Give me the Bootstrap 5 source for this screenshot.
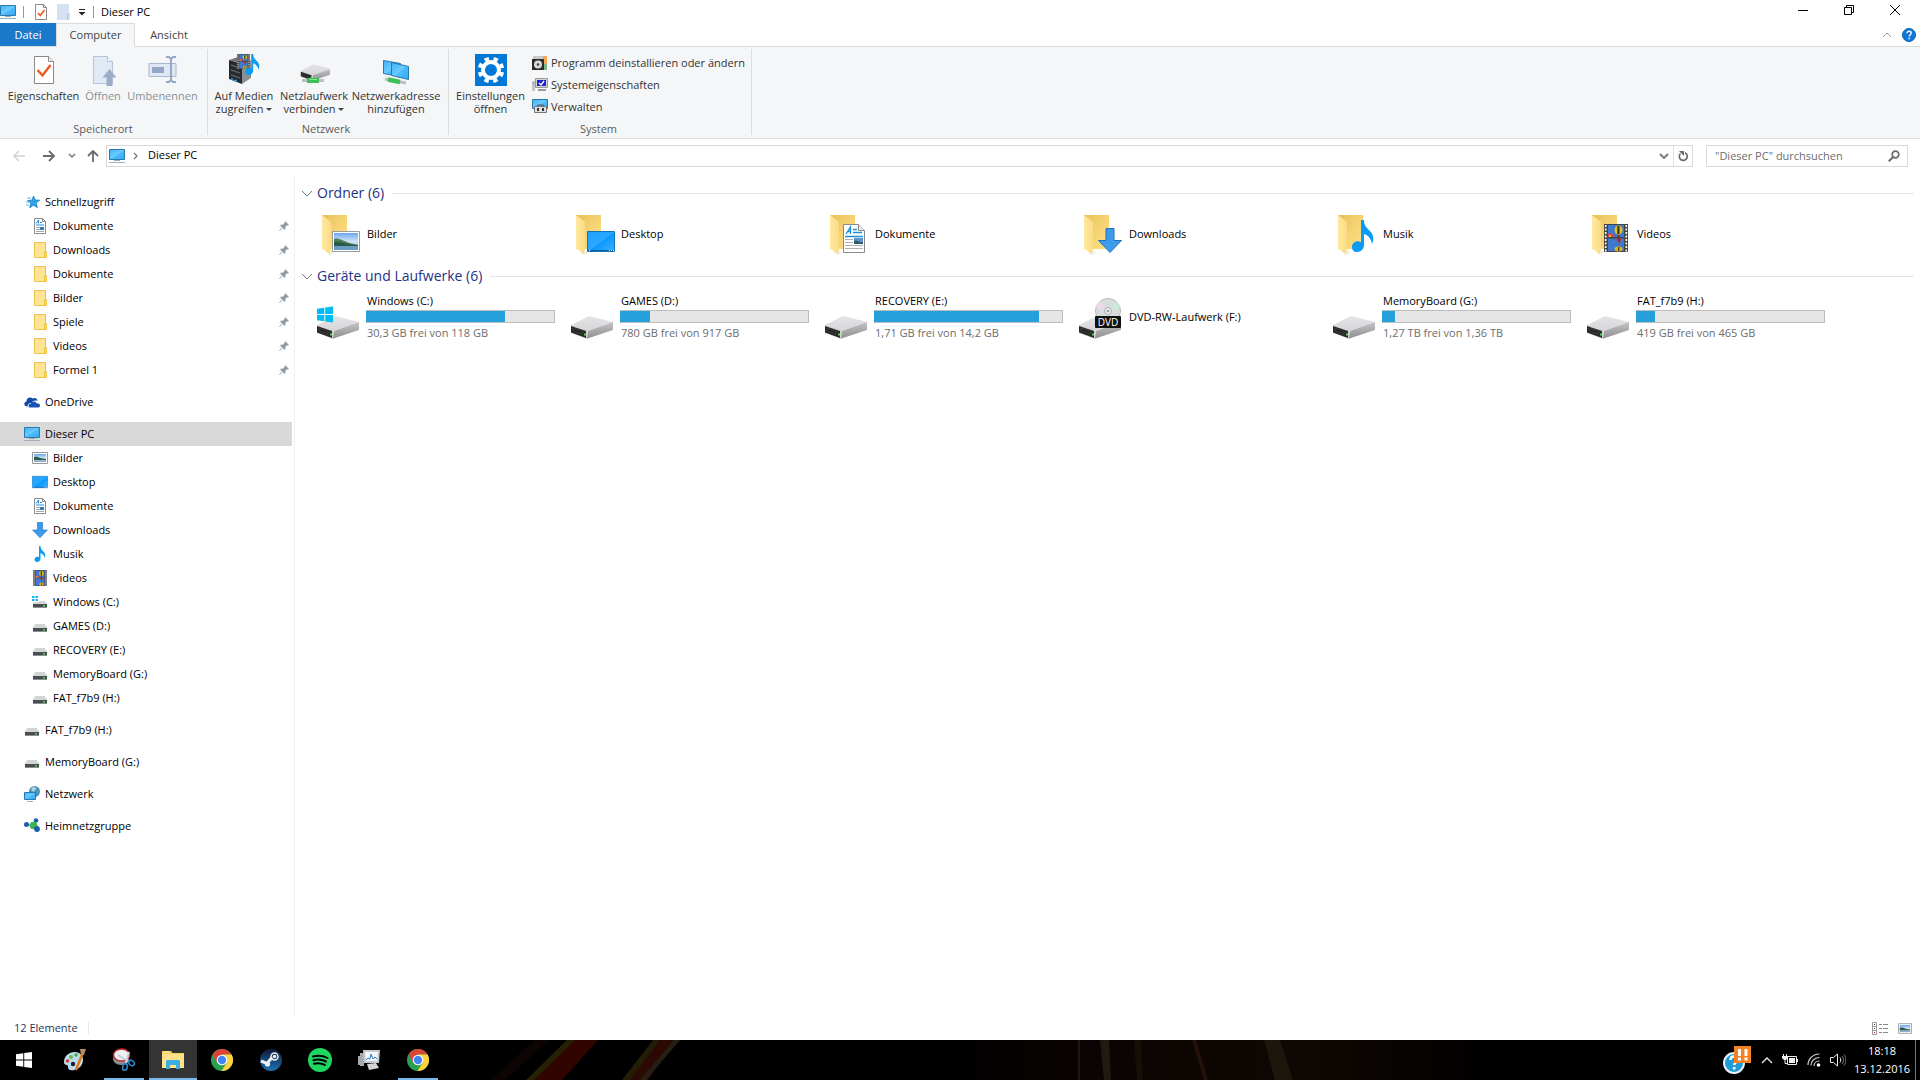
<!DOCTYPE html>
<html lang="de">
<head>
<meta charset="utf-8">
<meta name="viewport" content="width=device-width, initial-scale=1">
<title>Dieser PC</title>
<link href="https://cdn.jsdelivr.net/npm/bootstrap@5.3.0/dist/css/bootstrap.min.css" rel="stylesheet">
<style>
body{font-family:"Open Sans","Noto Sans",sans-serif;font-size:11px;line-height:16px;color:#000;background:#fff}
svg{display:block;flex:none}
.btn{--bs-btn-font-size:11px;--bs-btn-line-height:13px;--bs-btn-padding-x:0;--bs-btn-padding-y:0;--bs-btn-border-width:0;--bs-btn-border-radius:0;--bs-btn-color:#333;--bs-btn-disabled-color:#8a8f96;--bs-btn-disabled-opacity:1;--bs-btn-hover-bg:#e5f3ff}
.i16{width:16px;height:16px}
.i32{width:32px;height:32px}
.i48{width:48px;height:48px}
.titlebar{height:23px;gap:7px;padding-right:2px}
.titlebar .first-tool{padding-left:3px}
.winbtn{width:46px;height:20px}
.vline{width:1px;height:12px;background:#999}
.tabrow{height:24px;box-shadow:inset 0 -1px #dadbdc}
.tabrow a{height:23px;line-height:24px;text-align:center;color:#444;text-decoration:none}
.tabrow .tab-file{width:56px;background:#1979ca;color:#fff}
.tabrow .tab-on{width:79px;height:24px;line-height:22px;background:#f5f6f7;border:1px solid #dadbdc;border-width:1px 1px 0}
.tabrow .tab-view{width:68px}
.tabrow .tools{gap:10px;padding-right:4px}
.ribbon{height:92px;background:#f5f6f7;border-bottom:1px solid #dadbdc}
.group{margin:2px 0 3px;padding:2px 6px 0 5px;border-right:1px solid #dcdddf}
.group-net{padding-left:1px;padding-right:5px}
.group-sys{padding-left:3px}
.group-name{color:#5a5a5a;line-height:12px}
.big{display:flex;flex-direction:column;align-items:center;gap:3px;height:62px;padding-top:3px;white-space:nowrap}
.w-s{width:42px}.w-m{width:70px}.w-l{width:77px}.w-xl{width:94px}
.caret{display:inline-block;border:3px solid transparent;border-top-color:#444;border-bottom:0;vertical-align:2px}
.cmd-list{padding-left:3px}
.small-cmd{display:flex;align-items:center;gap:3px;height:22px;white-space:nowrap}
.toolbar{padding:6px 12px 8px 4px}
.t-30{width:30px}.t-26{width:26px}.t-16{width:16px}.t-18{width:18px}
.box{height:22px;border:1px solid #d9d9d9}
.addressbox{padding-left:2px;gap:8px;margin-right:13px}
.addressbox a{padding-left:2px;line-height:18px;margin-bottom:2px}
.searchbox{width:202px;padding:0 7px 0 8px}
.searchbox input{border:0;outline:0;padding:0;min-width:0;color:#333;background:none}
.searchbox input::placeholder{color:#6d6d6d}
.sidebar{width:295px;padding-top:15px;border-right:1px solid #f0f0f0}
.sidebar ul{margin-bottom:8px}
.sidebar a{display:flex;align-items:center;gap:5px;height:24px;width:292px;padding:0 3px 0 24px;color:#000;text-decoration:none}
.sidebar ul ul a{padding-left:32px}
.sidebar a.current{background:#d9d9d9}
.content{padding:7px 6px 0 6px}
.sec{height:22px;gap:4px;font-size:14px;line-height:22px;color:#1e3287;margin:0 0 6px;font-weight:400}
.sec hr{border-color:#e2e2e2;opacity:1;margin:0 0 0 4px}
.tiles{padding-left:12px;margin-bottom:7px}
.tile{display:flex;align-items:center;gap:5px;width:254px;height:48px;color:#000;text-decoration:none}
.tile-text{padding-left:1px}
.drive-info{width:189px}
.drive-info .progress{height:13px;margin:2px 0 1px;background:#e6e6e6;border:1px solid #bcbcbc;border-left-width:0;border-radius:0}
.drive-info .progress-bar{background:#26a0da}
.l15{line-height:15px}
.l17{line-height:17px;color:#6d6d6d}
.statusbar{height:24px;gap:10px;padding:0 8px 0 14px;color:#1e395b}
.statusbar .sepline{width:1px;height:12px;background:#e8e8e8}
.taskbar{height:40px;background:#000;position:relative;overflow:hidden;color:#fff}
.streaks{position:absolute;left:0;top:0}
.tasks{gap:1px;margin-left:3px}
.task{width:48px;height:40px;position:relative;display:flex;align-items:center;justify-content:center}
.task.open::after{content:"";position:absolute;left:4px;right:4px;bottom:0;height:2px;background:#76b9ed}
.task.front{background:#343434}
.task.front::after{left:0;right:0}
.tray{gap:9px}
.clock{line-height:18px;width:60px;text-align:center;margin:0 -6px 0 -3px}
.show-desk{width:5px;height:40px;border-left:1px solid #777}
</style>
<script src="https://cdn.jsdelivr.net/npm/bootstrap@5.3.0/dist/js/bootstrap.bundle.min.js" defer></script>
</head>
<body>
<svg width="0" height="0" class="position-absolute" aria-hidden="true">
<defs>
<linearGradient id="gScr" x1="0" y1="0" x2="1" y2="1"><stop offset="0" stop-color="#3fb2f5"/><stop offset=".5" stop-color="#6ccbff"/><stop offset=".52" stop-color="#4fbcfb"/><stop offset="1" stop-color="#35a8f3"/></linearGradient>
<linearGradient id="gDesk" x1="0" y1="0" x2="1" y2="1"><stop offset="0" stop-color="#1ea2ff"/><stop offset=".5" stop-color="#2ba8ff"/><stop offset=".52" stop-color="#0a98ff"/><stop offset="1" stop-color="#3db1ff"/></linearGradient>
<linearGradient id="gBack" x1="0" y1="0" x2="1" y2="1"><stop offset="0" stop-color="#e9c05a"/><stop offset=".5" stop-color="#f5d373"/><stop offset="1" stop-color="#ffe08a"/></linearGradient>
<linearGradient id="gFlap" x1="0" y1="0" x2="1" y2="0"><stop offset="0" stop-color="#ffe89e"/><stop offset="1" stop-color="#fbdc85"/></linearGradient>
<linearGradient id="gTop" x1="0" y1="0" x2="0" y2="1"><stop offset="0" stop-color="#e4e4e6"/><stop offset="1" stop-color="#d6d6d9"/></linearGradient>
<linearGradient id="gSide" x1="0" y1="0" x2="0" y2="1"><stop offset="0" stop-color="#c4c4c6"/><stop offset="1" stop-color="#8f8f92"/></linearGradient>
<linearGradient id="gSky" x1="0" y1="0" x2="0" y2="1"><stop offset="0" stop-color="#6aa8ee"/><stop offset=".5" stop-color="#cfe4f7"/><stop offset="1" stop-color="#7fa6c4"/></linearGradient>
<linearGradient id="gSteam" x1="0" y1="0" x2="0" y2="1"><stop offset="0" stop-color="#10183c"/><stop offset="1" stop-color="#1c73b0"/></linearGradient>
<linearGradient id="gNight" x1="0" y1="0" x2="1" y2="0"><stop offset="0" stop-color="#000"/><stop offset=".3" stop-color="#0b0402"/><stop offset=".65" stop-color="#0f0702"/><stop offset="1" stop-color="#000"/></linearGradient>
</defs>
<symbol id="pc" viewBox="0 0 16 16"><path d="M.5 1.500h15v10H.5z" fill="url(#gScr)" stroke="#2879ad"/><path d="M5 12.500h6" stroke="#9aa7b5"/><path d="M0 14.500h16" stroke="#9fb0c6"/></symbol>
<symbol id="docArt" viewBox="0 0 22 29"><path d="M.5.5h15l6 6v22H.5z" fill="#fff" stroke="#8a8a8a"/><path d="M15.500.5v6h6" fill="#e8e8e8" stroke="#8a8a8a"/><path d="M3 10 7.500 3v7M4.500 7.500h3M10 5.500h4M10 8.500h9" stroke="#1c8fdc" stroke-width="1.300" fill="none"/><path d="M2 12.500h18" stroke="#1c8fdc" stroke-width="1.500"/><path d="M2 15.500h8M2 18.500h8M2 21.500h18M2 24.500h18" stroke="#b0b0b0"/><path d="M11 14h9v6h-9z" fill="#5d93c9"/><path d="M11 17c3-2 5 2 9 1v2h-9z" fill="#2c5a6a"/></symbol>
<symbol id="doc" viewBox="0 0 16 16"><path d="M2.500.5h8l3 3v12h-11z" fill="#fff" stroke="#8a8a8a"/><path d="M10.500.5v3h3" fill="none" stroke="#8a8a8a"/><path d="M4 5.500 6.500 2v3.500M8 4.500h2M4 7h8" stroke="#1c8fdc" fill="none"/><path d="M4 9.500h4M4 11.500h4M4 13.500h8" stroke="#a0a8b0"/><path d="M8 9h4v3H8z" fill="#3a7cb5"/></symbol>
<symbol id="folder" viewBox="0 0 16 16"><path d="M2.500.5h11v9h1v6h-12z" fill="#ffe493" stroke="#e9c34c"/><path d="M12.500 15.500v-5h1.500" fill="none" stroke="#e3b93c"/></symbol>
<symbol id="drive" viewBox="0 0 16 16"><path d="m3 6h10l2 4H1z" fill="#d3d5d8"/><path d="M1 10h14v4H1z" fill="#4a4d50"/><path d="M1 13h14v1H1z" fill="#8d9094"/><path d="M11 11h2v1.500h-2z" fill="#3fe04a"/></symbol>
<symbol id="winlogo" viewBox="0 0 16 16"><path d="M0 2.300 7.300 1.200v6.400H0zM8.200 1 16 0v7.600H8.200zM0 8.500h7.300v6.300L0 13.800zM8.200 8.500H16V16l-7.800-1z" fill="currentColor"/></symbol>
<symbol id="note" viewBox="0 0 22 32"><path d="M9 0h3c0 6 3 8 6 11 4 4 4 9 2 13-.5-5-4-9-8-10v11c0 4-3 7-7 7-3 0-5-2-5-5 0-4 4-7 9-5z" fill="#0a9bf5"/></symbol>
<symbol id="arrowdn" viewBox="0 0 24 25"><path d="M8 .5h8v12h7.500L12 24.500.5 12.500H8z" fill="#3c9bea" stroke="#1f73bd"/></symbol>
<symbol id="film" viewBox="0 0 24 28"><path d="M0 0h24v28H0z" fill="#444"/><path d="M1.700 1v27M22.300 1v27" stroke="#fff" stroke-width="1.600" stroke-dasharray="2 1.500"/><path d="M4 1h16v12H4zM4 14.500h16V27H4z" fill="#3f78cf"/><path d="M4 10c2-2 5-1 7 3H4z" fill="#d0475a"/><path d="M5 11h2v2H5z" fill="#f1b83a"/><ellipse cx="14.500" cy="6" rx="4" ry="4.500" fill="#e2c21c"/><path d="M13.200 2h2.400v8h-2.400z" fill="#38401c"/><path d="M13.500 11h2v2h-2z" fill="#6a3b1b"/><path d="M12 14.500h6l-3 5z" fill="#c73b2b"/><path d="M14.200 14.500H16l-1 5z" fill="#4b2b7b"/><ellipse cx="14.500" cy="25" rx="4" ry="2.500" fill="#e0b31c"/><path d="M14 23h1.300v4H14z" fill="#38401c"/></symbol>
<symbol id="pic" viewBox="0 0 28 21"><path d="M.5.5h27v20H.5z" fill="#fff" stroke="#9b9b9b"/><path d="M2 2h24v17H2z" fill="url(#gSky)"/><path d="M2 8c6-2 8 3 24 6H2z" fill="#4f7d55"/><path d="M2 11c8-1 12 3 24 3v1.500H2z" fill="#2c5a4a"/><path d="M2 15h24v4H2z" fill="#6d9cc2"/></symbol>
<symbol id="picsm" viewBox="0 0 16 12"><path d="M.5.5h15v11H.5z" fill="#fff" stroke="#999"/><path d="M2 2h12v8H2z" fill="url(#gSky)"/><path d="M2 5c4-1 6 2 12 2v1H2z" fill="#2c5a4a"/></symbol>
<symbol id="desk" viewBox="0 0 28 21"><path d="M.5.5h27v20H.5z" fill="url(#gDesk)" stroke="#1174b5"/><path d="M1 19h26v1H1z" fill="#0b5e9c"/><path d="M2 19h1v1H2zM22 19h1v1h-1zM24 19h1v1h-1zM26 19h1v1h-1z" fill="#fff"/></symbol>
<symbol id="bigfolder" viewBox="0 0 48 48"><path d="M9 4h25v34H9z" fill="url(#gBack)"/><path d="m9 4 9 7v27l-1 6-8-7z" fill="url(#gFlap)"/><path d="m17 44 1-5 3 3z" fill="#eee"/></symbol>
<symbol id="bigdrive" viewBox="0 0 48 48"><path d="m4 31 18-9 24 6-25 9z" fill="url(#gTop)"/><path d="M21 37 46 28v8l-27 9z" fill="url(#gSide)"/><path d="m4 31 17 5.500-1 8.500L4 39z" fill="#d2d2d4"/><path d="m4 32 15 5v7L4 38.500z" fill="#2a2a2a"/><path d="m6 34.500 9 3v2l-9-3z" fill="#111" stroke="#555" stroke-width=".6"/><path d="M17 39.500h2v2h-2z" fill="#3be03f"/></symbol>
<symbol id="pin" viewBox="0 0 10 10"><path d="m6 0 4 4-1.200.5-.8-.2L6.300 6l.2 2-1 .8-1.900-1.900L.5 10 0 9.500l3.100-3.100L1.200 4.500l.8-1 2 .2L5.700 2 5.500 1.200z" fill="#8f9aa3"/></symbol>
<symbol id="chrome" viewBox="0 0 22 22"><circle cx="11" cy="11" r="11" fill="#2aa14f"/><path d="M1.500 5.500A11 11 0 0 1 20.500 5.500H11L6.200 13.700z" fill="#dc4437"/><path d="M20.500 5.500A11 11 0 0 1 10.500 22l5.200-8.300L11 5.500z" fill="#fdd23e"/><circle cx="11" cy="11" r="5.300" fill="#fff"/><circle cx="11" cy="11" r="4.200" fill="#4385f4"/></symbol>
</svg>

<div class="d-flex flex-column min-vh-100">
<header>
  <div class="titlebar d-flex align-items-center">
    <svg class="i16"><use href="#pc"/></svg>
    <span class="vline"></span>
    <button class="btn first-tool" aria-label="Eigenschaften"><svg class="i16" viewBox="0 0 16 16"><path d="M1.500 .5h8l3 3v12h-11z" fill="#fff" stroke="#8b8b8b"/><path d="M9.500.5v3h3" fill="none" stroke="#8b8b8b"/><path d="m4 9 2.200 2.500L10.500 6" fill="none" stroke="#f0591a" stroke-width="1.700"/></svg></button>
    <button class="btn" aria-label="Neuer Ordner" disabled><svg width="14" height="16" viewBox="0 0 14 16"><path d="M0 0h12v9h1v7H0z" fill="#d5e0f2"/><path d="M10.500 15.500v-5h2" fill="none" stroke="#b4c6e4"/></svg></button>
    <button class="btn" aria-label="Symbolleiste anpassen"><svg width="8" height="8" viewBox="0 0 8 8"><path d="M1 1.500h6" stroke="#222"/><path d="M.5 4h7L4 7.500z" fill="#222"/></svg></button>
    <span class="vline"></span>
    <span>Dieser PC</span>
    <div class="ms-auto d-flex align-self-start">
      <button class="btn winbtn" aria-label="Minimieren"><svg class="mx-auto" width="10" height="10"><path d="M0 5.500h10" stroke="#000"/></svg></button>
      <button class="btn winbtn" aria-label="Verkleinern"><svg class="mx-auto" width="10" height="10"><path d="M.5 2.500h7v7h-7zM2.500 2.500v-2h7v7h-2" fill="none" stroke="#000"/></svg></button>
      <button class="btn winbtn" aria-label="Schließen"><svg class="mx-auto" width="10" height="10"><path d="m0 0 10 10M10 0 0 10" stroke="#000"/></svg></button>
    </div>
  </div>
  <nav class="tabrow d-flex">
    <a href="#" class="tab-file">Datei</a><a href="#" class="tab-on">Computer</a><a href="#" class="tab-view">Ansicht</a>
    <div class="tools ms-auto d-flex align-items-center">
      <button class="btn" aria-label="Menüband minimieren"><svg width="10" height="6" viewBox="0 0 10 6"><path d="m1 5 4-4 4 4" fill="none" stroke="#999"/></svg></button>
      <button class="btn" aria-label="Hilfe"><svg width="14" height="14" viewBox="0 0 14 14"><circle cx="7" cy="7" r="6.500" fill="#1278d6" stroke="#0b5fae"/><path d="M5 5.200c0-2.700 4.200-2.500 4.200-.1C9.200 6.700 7.200 6.700 7.200 8.500M7.200 9.800v1.400" fill="none" stroke="#fff" stroke-width="1.400"/></svg></button>
    </div>
  </nav>
  <div class="ribbon d-flex">
    <section class="group d-flex flex-column">
      <div class="d-flex flex-fill">
        <button class="btn big w-l"><svg class="i32" viewBox="0 0 32 32"><path d="M6.500 2.500h14l5 5v22h-19z" fill="#fff" stroke="#8b8b8b"/><path d="M20.500 2.500v5h5" fill="#eee" stroke="#8b8b8b"/><path d="m9.500 16 5 5.500 8-10.500" fill="none" stroke="#f0591a" stroke-width="2.400"/></svg>Eigenschaften</button>
        <button class="btn big w-s" disabled><svg class="i32" viewBox="0 0 32 32"><path d="M6.500 2.500h14l5 5v22h-19z" fill="#e2e9f6" stroke="#b6c3da"/><path d="M20.500 2.500v5h5" fill="#f3f6fb" stroke="#b6c3da"/><path d="m22.500 15 7 8.500h-4V32h-6v-8.500h-4z" fill="#9dadc7"/></svg>Öffnen</button>
        <button class="btn big w-l" disabled><svg class="i32" viewBox="0 0 32 32"><path d="M2 9.500h27v13H2z" fill="#dfe8f5" stroke="#a9b9d4"/><path d="M5 13h12v6H5z" fill="#94a7c6"/><path d="M19 3h3l2 2 2-2h3M24 5v22M19 28h3l2-2 2 2h3" fill="none" stroke="#94a7c6" stroke-width="2"/></svg>Umbenennen</button>
      </div>
      <div class="group-name text-center">Speicherort</div>
    </section>
    <section class="group group-net d-flex flex-column">
      <div class="d-flex flex-fill">
        <button class="btn big w-m"><svg class="i32" viewBox="0 0 32 32"><path d="m1 6 9-3 13 3-8 4z" fill="#777"/><path d="m1 6 13 4v20L1 25z" fill="#26292d"/><path d="m14 10 9-4v18l-9 6z" fill="#8d9093"/><path d="m3 11 9 3M3 16l9 3M3 21l9 3" stroke="#595e63" stroke-width="1.500"/><path d="M3 25h2M6 26.500h3" stroke="#23a5f5" stroke-width="1.500"/><use href="#film" x="8" y="0" width="15" height="15"/><use href="#note" x="17" y="0" width="15" height="21"/></svg><span>Auf Medien<br>zugreifen <i class="caret"></i></span></button>
        <button class="btn big w-m"><svg class="i32" viewBox="0 0 32 32"><use href="#bigdrive" x="0" y="-5" width="34" height="34"/><path d="M4 26.500h22" stroke="#b9c0c4" stroke-width="3"/><path d="M9 26.500h12" stroke="#3fbf54" stroke-width="5"/><path d="M11 25.500h8" stroke="#86e394" stroke-width="1"/></svg><span>Netzlaufwerk<br>verbinden <i class="caret"></i></span></button>
        <button class="btn big w-xl"><svg class="i32" viewBox="0 0 32 32"><path d="m3.500 6.500 17 3v13l-17-3z" fill="url(#gScr)" stroke="#2879ad"/><path d="m11.500 8.500 17 4v13l-17-4z" fill="url(#gScr)" stroke="#2879ad"/><path d="m5 25 21 4" stroke="#b9c0c4" stroke-width="3"/><path d="m8 25.500 12 2.500" stroke="#3fbf54" stroke-width="4.500"/></svg><span>Netzwerkadresse<br>hinzufügen</span></button>
      </div>
      <div class="group-name text-center">Netzwerk</div>
    </section>
    <section class="group group-sys d-flex flex-column">
      <div class="d-flex flex-fill">
        <button class="btn big w-l"><svg class="i32" viewBox="0 0 32 32"><path d="M0 0h32v32H0z" fill="#0078d7"/><circle cx="16" cy="16" r="8" fill="none" stroke="#fff" stroke-width="4"/><circle cx="16" cy="16" r="11.300" fill="none" stroke="#fff" stroke-width="4" stroke-dasharray="4.400 4.470" transform="rotate(11 16 16)"/></svg><span>Einstellungen<br>öffnen</span></button>
        <div class="cmd-list d-flex flex-column">
          <button class="btn small-cmd"><svg class="i16" viewBox="0 0 16 16"><path d="M1 2h12l2 3v10H1z" fill="#c9c9c9"/><path d="M11 2h4v8h-4z" fill="#f2a65a"/><path d="M12 10h3v6h-3z" fill="#7fb58a"/><path d="M0 5h12v11H0z" fill="#2b2b2b"/><circle cx="6" cy="10.500" r="4" fill="#dadada"/><circle cx="6" cy="10.500" r="1.300" fill="#444"/></svg>Programm deinstallieren oder ändern</button>
          <button class="btn small-cmd"><svg class="i16" viewBox="0 0 16 16"><path d="M0 5h3v10H0z" fill="#c2c4c6"/><path d="M1 7h1v1H1z" fill="#2fae3a"/><path d="M3.500 2.500h12v9h-12z" fill="#d5d5d5" stroke="#999"/><path d="M5 4h9v6H5z" fill="#1a24c9"/><path d="m7 7 2 2 3-4" fill="none" stroke="#fff" stroke-width="1.300"/><path d="M6 14h8" stroke="#999" stroke-width="2"/></svg>Systemeigenschaften</button>
          <button class="btn small-cmd"><svg class="i16" viewBox="0 0 16 16"><path d="M.5 1.500h15v9H.5z" fill="url(#gScr)" stroke="#2879ad"/><path d="M5.500 8.500V7h6v1.500" fill="none" stroke="#555"/><path d="M2.500 8.500h12v6h-12z" fill="#e0e0e2" stroke="#777"/><path d="M5 10h2v3H5zM10 10h2v3h-2z" fill="#333"/></svg>Verwalten</button>
        </div>
      </div>
      <div class="group-name text-center">System</div>
    </section>
  </div>
  <div class="toolbar d-flex align-items-center">
    <button class="btn t-30" aria-label="Zurück" disabled><svg class="mx-auto" width="12" height="12"><path d="M12 6H1M6 1 1 6l5 5" fill="none" stroke="#d2d2d2" stroke-width="1.500"/></svg></button>
    <button class="btn t-30" aria-label="Vorwärts"><svg class="mx-auto" width="12" height="12"><path d="M0 6h11M6 1l5 5-5 5" fill="none" stroke="#6b6b6b" stroke-width="1.800"/></svg></button>
    <button class="btn t-16" aria-label="Verlauf"><svg class="mx-auto" width="8" height="6"><path d="m1 1 3 3 3-3" fill="none" stroke="#777" stroke-width="1.500"/></svg></button>
    <button class="btn t-26" aria-label="Nach oben"><svg class="mx-auto" width="12" height="12"><path d="M6 12V1M1 6l5-5 5 5" fill="none" stroke="#6b6b6b" stroke-width="1.800"/></svg></button>
    <div class="box addressbox d-flex align-items-center flex-fill">
      <svg class="i16"><use href="#pc"/></svg>
      <svg width="5" height="8"><path d="m1 1 3 3-3 3" fill="none" stroke="#777" stroke-width="1.300"/></svg>
      <a href="#" class="text-black text-decoration-none">Dieser PC</a>
      <div class="d-flex align-items-center align-self-stretch ms-auto">
      <button class="btn t-18" aria-label="Adressen anzeigen"><svg class="mx-auto" width="10" height="6"><path d="m1 1 4 4 4-4" fill="none" stroke="#7c7c7c" stroke-width="2"/></svg></button>
      <span class="align-self-stretch border-start"></span>
      <button class="btn t-18" aria-label="Aktualisieren"><svg class="mx-auto" width="11" height="12" viewBox="0 0 11 12"><path d="M7 2.800A4 4 0 1 1 2.500 3.500" fill="none" stroke="#6b6b6b" stroke-width="1.700"/><path d="M1 1h5v5z" fill="#6b6b6b"/></svg></button>
      </div>
    </div>
    <form class="box searchbox d-flex align-items-center">
      <input class="flex-fill" type="search" aria-label="Suchen" placeholder="&quot;Dieser PC&quot; durchsuchen">
      <svg width="12" height="12"><circle cx="7.500" cy="4.500" r="3.300" fill="none" stroke="#6b6b6b" stroke-width="1.700"/><path d="M5 7 .8 11.200" stroke="#6b6b6b" stroke-width="2"/></svg>
    </form>
  </div>
</header>

<main class="d-flex flex-fill">
  <nav class="sidebar flex-shrink-0">
    <ul class="list-unstyled">
      <li><a href="#"><svg class="i16" viewBox="0 0 16 16"><path d="m9.500 2 1.700 4 4.500.2-3.600 2.900 1.300 4.500-3.900-2.400-3.800 2.600 1.200-4.500L3.500 6.500l4.400-.3z" fill="#2fa3e8" stroke="#1b7fc4" stroke-width=".8"/><path d="M3 4h4M2 8h3M2 11h3" stroke="#58b7ef"/></svg>Schnellzugriff</a>
        <ul class="list-unstyled mb-0">
          <li><a href="#"><svg class="i16"><use href="#doc"/></svg>Dokumente<svg class="ms-auto" width="10" height="10"><use href="#pin"/></svg></a></li>
          <li><a href="#"><svg class="i16"><use href="#folder"/></svg>Downloads<svg class="ms-auto" width="10" height="10"><use href="#pin"/></svg></a></li>
          <li><a href="#"><svg class="i16"><use href="#folder"/></svg>Dokumente<svg class="ms-auto" width="10" height="10"><use href="#pin"/></svg></a></li>
          <li><a href="#"><svg class="i16"><use href="#folder"/></svg>Bilder<svg class="ms-auto" width="10" height="10"><use href="#pin"/></svg></a></li>
          <li><a href="#"><svg class="i16"><use href="#folder"/></svg>Spiele<svg class="ms-auto" width="10" height="10"><use href="#pin"/></svg></a></li>
          <li><a href="#"><svg class="i16"><use href="#folder"/></svg>Videos<svg class="ms-auto" width="10" height="10"><use href="#pin"/></svg></a></li>
          <li><a href="#"><svg class="i16"><use href="#folder"/></svg>Formel 1<svg class="ms-auto" width="10" height="10"><use href="#pin"/></svg></a></li>
        </ul></li>
    </ul>
    <ul class="list-unstyled"><li><a href="#"><svg class="i16" viewBox="0 0 16 16"><path d="M3.500 12.500C-.5 12.500-.5 8 2.500 7.500 2.500 4 6 2.500 8.500 4.500c3-1.500 5 .5 5 2.500-3-1-5.500 0-6 2-2.500 0-4 1-4 3.500z" fill="#1048a8"/><path d="M6 13.500c-2.500-.5-1.500-4 .8-3.700.5-2.800 4.700-3 5.700-.5 2-.3 3.500.7 3.500 2.200s-1 2-2 2z" fill="#1553b8"/></svg>OneDrive</a></li></ul>
    <ul class="list-unstyled">
      <li><a href="#" class="current" aria-current="page"><svg class="i16"><use href="#pc"/></svg>Dieser PC</a>
        <ul class="list-unstyled mb-0">
          <li><a href="#"><svg class="i16"><use href="#picsm"/></svg>Bilder</a></li>
          <li><a href="#"><svg class="i16"><use href="#desk"/></svg>Desktop</a></li>
          <li><a href="#"><svg class="i16"><use href="#doc"/></svg>Dokumente</a></li>
          <li><a href="#"><svg class="i16"><use href="#arrowdn"/></svg>Downloads</a></li>
          <li><a href="#"><svg class="i16"><use href="#note"/></svg>Musik</a></li>
          <li><a href="#"><svg class="i16"><use href="#film"/></svg>Videos</a></li>
          <li><a href="#"><svg class="i16" viewBox="0 0 16 16"><path d="M0 2h2.500v2H0zM3.500 2H6v2H3.500zM0 5h2.500v2H0zM3.500 5H6v2H3.500z" fill="#16b6f0"/><path d="M7 7h6l2 3H1l1-2h5z" fill="#d3d5d8"/><path d="M1 10h14v4H1z" fill="#4a4d50"/><path d="M1 13h14v1H1z" fill="#8d9094"/><path d="M11 11h2v1.500h-2z" fill="#3fe04a"/></svg>Windows (C:)</a></li>
          <li><a href="#"><svg class="i16"><use href="#drive"/></svg>GAMES (D:)</a></li>
          <li><a href="#"><svg class="i16"><use href="#drive"/></svg>RECOVERY (E:)</a></li>
          <li><a href="#"><svg class="i16"><use href="#drive"/></svg>MemoryBoard (G:)</a></li>
          <li><a href="#"><svg class="i16"><use href="#drive"/></svg>FAT_f7b9 (H:)</a></li>
        </ul></li>
    </ul>
    <ul class="list-unstyled"><li><a href="#"><svg class="i16"><use href="#drive"/></svg>FAT_f7b9 (H:)</a></li></ul>
    <ul class="list-unstyled"><li><a href="#"><svg class="i16"><use href="#drive"/></svg>MemoryBoard (G:)</a></li></ul>
    <ul class="list-unstyled"><li><a href="#"><svg class="i16" viewBox="0 0 16 16"><circle cx="10.500" cy="5.500" r="5.500" fill="#4f93b8"/><path d="M7 3c2-3 5-2 5 0s-3 1-2 4z" fill="#a9d3e6"/><path d="M.5 6.500h11v7H.5z" fill="url(#gScr)" stroke="#2879ad"/><path d="M3 15.500h6" stroke="#9fb0c6"/></svg>Netzwerk</a></li></ul>
    <ul class="list-unstyled"><li><a href="#"><svg class="i16" viewBox="0 0 16 16"><path d="m3 7 6 0 4-4M9 7l4 5" stroke="#8fb3d8" stroke-width="1.500" fill="none"/><circle cx="2.500" cy="6.500" r="2.500" fill="#1a5fae"/><circle cx="12" cy="2.500" r="2.300" fill="#1a5fae"/><circle cx="9.500" cy="7.500" r="3.800" fill="#3db550"/><circle cx="13" cy="11" r="2.900" fill="#1a5fae"/></svg>Heimnetzgruppe</a></li></ul>
  </nav>

  <section class="content flex-fill">
    <h2 class="sec d-flex align-items-center"><svg width="12" height="7" viewBox="0 0 12 7"><path d="m1 1 5 5 5-5" fill="none" stroke="#777"/></svg>Ordner (6)<hr class="flex-fill"></h2>
    <div class="tiles d-flex flex-wrap">
      <a href="#" class="tile"><svg class="i48" viewBox="0 -1 48 48"><use href="#bigfolder" width="48" height="48"/><use href="#pic" x="19" y="20" width="28" height="21"/></svg><span class="tile-text">Bilder</span></a>
      <a href="#" class="tile"><svg class="i48" viewBox="0 -1 48 48"><use href="#bigfolder" width="48" height="48"/><use href="#desk" x="20" y="20" width="28" height="21"/></svg><span class="tile-text">Desktop</span></a>
      <a href="#" class="tile"><svg class="i48" viewBox="0 -1 48 48"><use href="#bigfolder" width="48" height="48"/><use href="#docArt" x="22" y="13" width="22" height="29"/></svg><span class="tile-text">Dokumente</span></a>
      <a href="#" class="tile"><svg class="i48" viewBox="0 -1 48 48"><use href="#bigfolder" width="48" height="48"/><use href="#arrowdn" x="23" y="17" width="24" height="25"/></svg><span class="tile-text">Downloads</span></a>
      <a href="#" class="tile"><svg class="i48" viewBox="0 -1 48 48"><use href="#bigfolder" width="48" height="48"/><use href="#note" x="23" y="9" width="22" height="32"/></svg><span class="tile-text">Musik</span></a>
      <a href="#" class="tile"><svg class="i48" viewBox="0 -1 48 48"><use href="#bigfolder" width="48" height="48"/><use href="#film" x="21" y="13" width="24" height="28"/></svg><span class="tile-text">Videos</span></a>
    </div>
    <h2 class="sec d-flex align-items-center"><svg width="12" height="7" viewBox="0 0 12 7"><path d="m1 1 5 5 5-5" fill="none" stroke="#777"/></svg>Geräte und Laufwerke (6)<hr class="flex-fill"></h2>
    <div class="tiles d-flex flex-wrap">
      <a href="#" class="tile"><svg class="i48" viewBox="0 -1 48 48"><use href="#bigdrive" width="48" height="48"/><use href="#winlogo" x="4" y="12" width="16" height="17" color="#00bcf2"/></svg><span class="drive-info d-block"><span class="tile-text l15 d-block">Windows (C:)</span><span class="progress"><span class="progress-bar" style="width:74%"></span></span><span class="tile-text l17 d-block">30,3 GB frei von 118 GB</span></span></a>
      <a href="#" class="tile"><svg class="i48" viewBox="0 -1 48 48"><use href="#bigdrive" width="48" height="48"/></svg><span class="drive-info d-block"><span class="tile-text l15 d-block">GAMES (D:)</span><span class="progress"><span class="progress-bar" style="width:16%"></span></span><span class="tile-text l17 d-block">780 GB frei von 917 GB</span></span></a>
      <a href="#" class="tile"><svg class="i48" viewBox="0 -1 48 48"><use href="#bigdrive" width="48" height="48"/></svg><span class="drive-info d-block"><span class="tile-text l15 d-block">RECOVERY (E:)</span><span class="progress"><span class="progress-bar" style="width:88%"></span></span><span class="tile-text l17 d-block">1,71 GB frei von 14,2 GB</span></span></a>
      <a href="#" class="tile"><svg class="i48" viewBox="0 -1 48 48"><use href="#bigdrive" width="48" height="48"/><circle cx="33" cy="17" r="12.500" fill="#d9dcdd" stroke="#b9bcbd"/><path d="m33 17-12-3a12 12 0 0 1 4-7z" fill="#ecd9ea"/><path d="m33 17 8-9a12 12 0 0 1 4 6z" fill="#c9ecd9"/><circle cx="33" cy="17" r="3.500" fill="#eee" stroke="#aaa"/><circle cx="33" cy="17" r="1.300" fill="#999"/><rect x="20" y="22" width="26" height="12" rx="1" fill="#111"/><text x="33" y="32" text-anchor="middle" font-size="10" fill="#fff">DVD</text></svg><span class="tile-text">DVD-RW-Laufwerk (F:)</span></a>
      <a href="#" class="tile"><svg class="i48" viewBox="0 -1 48 48"><use href="#bigdrive" width="48" height="48"/></svg><span class="drive-info d-block"><span class="tile-text l15 d-block">MemoryBoard (G:)</span><span class="progress"><span class="progress-bar" style="width:7%"></span></span><span class="tile-text l17 d-block">1,27 TB frei von 1,36 TB</span></span></a>
      <a href="#" class="tile"><svg class="i48" viewBox="0 -1 48 48"><use href="#bigdrive" width="48" height="48"/></svg><span class="drive-info d-block"><span class="tile-text l15 d-block">FAT_f7b9 (H:)</span><span class="progress"><span class="progress-bar" style="width:10%"></span></span><span class="tile-text l17 d-block">419 GB frei von 465 GB</span></span></a>
    </div>
  </section>
</main>

<div class="statusbar d-flex align-items-center">
  <span>12 Elemente</span><span class="sepline"></span>
  <button class="btn ms-auto" aria-label="Details"><svg width="16" height="13"><path d="M.5.5h4v12h-4zM.5 4.500h4M.5 8.500h4" fill="none" stroke="#999"/><path d="M7 2.500h3M11 2.500h5M7 6.500h3M11 6.500h5M7 10.500h3M11 10.500h5" stroke="#888"/><path d="M2 2h1v1H2zM2 6h1v1H2z" fill="#444"/><path d="M2 10h1v1H2z" fill="#d22"/></svg></button>
  <button class="btn" aria-label="Große Symbole"><svg width="14" height="11"><use href="#picsm"/></svg></button>
</div>

<footer class="taskbar d-flex align-items-center">
  <svg class="streaks" width="1920" height="40" aria-hidden="true">
    <path d="M940 0h560v40H940z" fill="url(#gNight)"/>
    <path d="m535 0h15l-45 40h-15z" fill="#0e0404"/>
    <path d="m574 0h24l-36 40h-28z" fill="#300500"/><path d="m567 0h8l-41 40h-8z" fill="#262005"/>
    <path d="m660 0h16l-28 40h-20z" fill="#2c0902"/><path d="m653 0h7l-30 40h-8z" fill="#231d08"/><path d="m674 0h6l-34 40h-6z" fill="#252014"/>
    <path d="M1078 0h2v40h-2z" fill="#1f1714"/><path d="m1100 0h9l2 40h-7z" fill="#1f1b10"/><path d="m1134 0h7l2 40h-6z" fill="#150f07"/><path d="m1192 0h4l12 40h-4z" fill="#241008"/><path d="m1264 0h16l13 40h-18z" fill="#1c160c"/>
  </svg>
  <div class="d-flex position-relative">
    <button class="btn task text-white" aria-label="Start"><svg class="i16"><use href="#winlogo"/></svg></button>
    <div class="tasks d-flex">
      <button class="btn task" aria-label="Paint"><svg width="24" height="24" viewBox="0 0 24 24"><path d="M1 14C1 7 9 2 16 5c4 2 5 7 3 11-2 5-8 7-12 6-3-1-1-4-3-5-2 0-3-1-3-3z" fill="#bcdcee"/><circle cx="4.500" cy="13" r="1.800" fill="#d43a2f"/><circle cx="8" cy="9" r="2" fill="#6cb84a"/><circle cx="13" cy="7" r="1.800" fill="#3fae49"/><circle cx="10" cy="16" r="2.200" fill="#123"/><path d="M20 4 13 22" stroke="#e2761e" stroke-width="2.500"/><path d="m17 1 6 0-2 6h-3z" fill="#b78a5c"/></svg></button>
      <button class="btn task open" aria-label="Snipping Tool"><svg width="24" height="24" viewBox="0 0 24 24"><ellipse cx="9" cy="11" rx="8" ry="6" fill="#8d8f93"/><ellipse cx="9.500" cy="7" rx="8" ry="6" fill="#eef0f2" stroke="#c8242b" stroke-width="1.500"/><path d="m6 7 11 7M17 4l-3 11" stroke="#c9cdd2" stroke-width="2"/><ellipse cx="13" cy="19" rx="2.300" ry="3.300" fill="none" stroke="#2b88cf" stroke-width="1.600" transform="rotate(15 13 19)"/><ellipse cx="19.500" cy="15" rx="3.200" ry="2.300" fill="none" stroke="#2b88cf" stroke-width="1.600" transform="rotate(40 19.500 15)"/></svg></button>
      <button class="btn task open front" aria-label="Explorer"><svg width="22" height="20" viewBox="0 0 22 20"><path d="M0 1h9l1.500 2H22v15H0z" fill="#f7cf55"/><path d="M0 4h22v14H0z" fill="#ffe28a"/><path d="M1 2h6" stroke="#fff3c9"/><path d="M4 19v-8l1-1h12l1 1v8h-4v-4H8v4z" fill="#3aaee3"/></svg></button>
      <button class="btn task" aria-label="Chrome"><svg width="22" height="22"><use href="#chrome"/></svg></button>
      <button class="btn task" aria-label="Steam"><svg width="22" height="22" viewBox="0 0 22 22"><circle cx="11" cy="11" r="11" fill="url(#gSteam)"/><path d="m1 12 6 2.500 5-6" stroke="#eee" stroke-width="3" fill="none"/><circle cx="14.500" cy="7.500" r="3.500" fill="none" stroke="#eee" stroke-width="1.500"/><circle cx="14.500" cy="7.500" r="1.800" fill="#eee"/><circle cx="7.500" cy="15" r="2.600" fill="#eee"/></svg></button>
      <button class="btn task" aria-label="Spotify"><svg width="24" height="24" viewBox="0 0 24 24"><circle cx="12" cy="12" r="12" fill="#1ed760"/><path d="M5 8.500c5-1.500 10-1 14.500 1.500M5.500 12.200c4-1.200 8.500-.8 12.500 1.300M6 15.700c4-1 7.500-.6 10.800 1.200" fill="none" stroke="#000" stroke-width="2" stroke-linecap="round"/></svg></button>
      <button class="btn task" aria-label="Ressourcenmonitor"><svg width="24" height="22" viewBox="0 0 24 22"><path d="M1 7h3v9H1zM3 4h4v13H3z" fill="#a6a8aa"/><path d="M6 1h17l-1 13H7z" fill="#c6c9cb"/><path d="M8 3h13l-1 9H9z" fill="#f4f8fb"/><path d="m9 11 2-2 2 1 1-5 2 5 2-2 2 2" fill="none" stroke="#2d7fc4"/><path d="m10 15 9-1 3 5-10 2z" fill="#d5d5d5"/></svg></button>
      <button class="btn task open" aria-label="Chrome"><svg width="22" height="22"><use href="#chrome"/></svg></button>
    </div>
  </div>
  <div class="tray ms-auto d-flex align-items-center position-relative">
    <button class="btn" aria-label="Benachrichtigung"><svg width="30" height="30" viewBox="0 0 30 30"><circle cx="12" cy="18" r="10" fill="#1f9bd8" stroke="#e8f4fb" stroke-width="2"/><path d="M8.500 15c0-4.500 7-4.500 7-.3 0 2.600-3.300 2.300-3.300 5.300M12.200 22v2.500" fill="none" stroke="#fff" stroke-width="2.500"/><path d="M12 1h17v17H12z" fill="#f58220"/><path d="M17.500 4v7M24 4v7M17.500 12.500v3M24 12.500v3" stroke="#fff" stroke-width="3"/></svg></button>
    <button class="btn" aria-label="Ausgeblendete Symbole"><svg width="12" height="8"><path d="m1 7 5-5 5 5" fill="none" stroke="#eee" stroke-width="1.300"/></svg></button>
    <button class="btn" aria-label="Akku"><svg width="16" height="12" viewBox="0 0 16 12"><path d="M5.500 2.500h9v8h-9z" fill="none" stroke="#eee"/><path d="M7 4h6v5H7z" fill="#eee"/><path d="M15 5h1v3h-1zM1 0h1v2H1zM4 0h1v2H4zM0 2h6v2L4 6H2L0 4z" fill="#eee"/><path d="M3 6v3.500h2" fill="none" stroke="#eee"/></svg></button>
    <button class="btn" aria-label="WLAN"><svg width="14" height="14" viewBox="0 0 14 14"><path d="M1 12C1 6 6 1 12.500 1M4 12.500C4 8 8 4.500 12.500 4.500M7 13c0-3 2.500-5 5.500-5" fill="none" stroke="#ccc" stroke-width="1.200"/><circle cx="11.500" cy="12" r="1.800" fill="#fff"/></svg></button>
    <button class="btn" aria-label="Lautstärke"><svg width="16" height="14" viewBox="0 0 16 14"><path d="M.5 4.500h3l4-3.500v12l-4-3.500h-3z" fill="none" stroke="#eee"/><path d="M10 4.500c1 1.500 1 3.500 0 5" fill="none" stroke="#eee"/><path d="M12 3c2 2.500 2 5.500 0 8M14 1.500c2.500 3.500 2.500 7.500 0 11" fill="none" stroke="#777"/></svg></button>
    <div class="clock">18:18<br>13.12.2016</div>
    <span class="show-desk"></span>
  </div>
</footer>
</div>
</body>
</html>
